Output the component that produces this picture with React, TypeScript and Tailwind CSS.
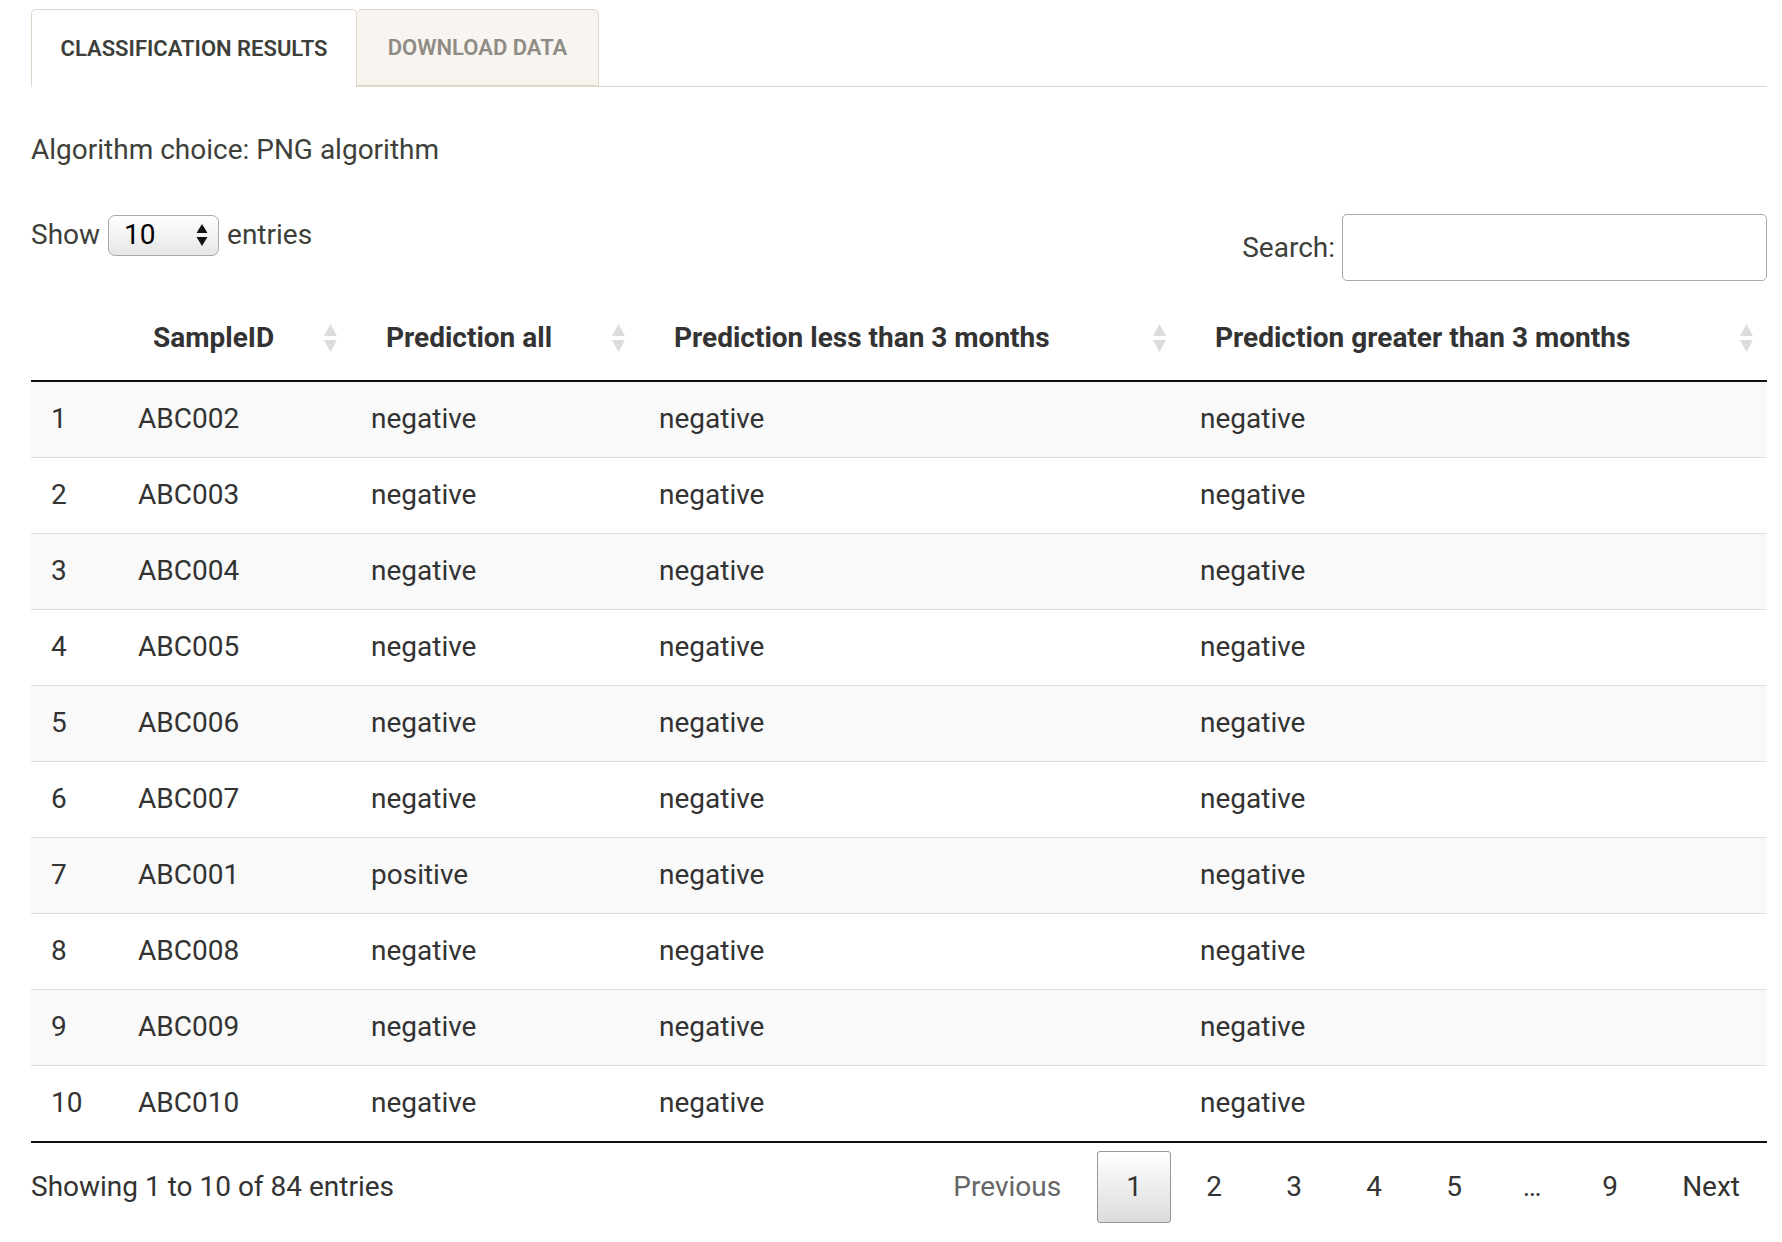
import React from "react";

const rows = [
  ["1", "ABC002", "negative", "negative", "negative"],
  ["2", "ABC003", "negative", "negative", "negative"],
  ["3", "ABC004", "negative", "negative", "negative"],
  ["4", "ABC005", "negative", "negative", "negative"],
  ["5", "ABC006", "negative", "negative", "negative"],
  ["6", "ABC007", "negative", "negative", "negative"],
  ["7", "ABC001", "positive", "negative", "negative"],
  ["8", "ABC008", "negative", "negative", "negative"],
  ["9", "ABC009", "negative", "negative", "negative"],
  ["10", "ABC010", "negative", "negative", "negative"],
];

const headers = [
  "SampleID",
  "Prediction all",
  "Prediction less than 3 months",
  "Prediction greater than 3 months",
];

function SortIcon() {
  return (
    <svg width="13" height="28" viewBox="0 0 13 28" className="absolute right-[14px] top-1/2 -translate-y-1/2">
      <polygon points="6.5,0 13,12 0,12" fill="#dcdcdc" />
      <polygon points="0,16 13,16 6.5,28" fill="#dcdcdc" />
    </svg>
  );
}

function PageButton({ label, active }: { label: string; active?: boolean }) {
  if (active) {
    return (
      <span className="ml-[6px] flex h-[72px] w-[74px] items-center justify-center rounded-[3px] border border-[#979797] bg-gradient-to-b from-white to-[#dcdcdc] text-[#333]">
        {label}
      </span>
    );
  }
  return (
    <span className="ml-[6px] flex h-[72px] w-[74px] items-center justify-center text-[#333]">{label}</span>
  );
}

export default function App() {
  return (
    <div className="min-h-[1242px] w-full bg-white pl-[31px] pr-[15px] pt-[9px] text-[#3e3f3a] [font-family:Roboto,'Liberation_Sans',sans-serif]">
      {/* Tabs */}
      <div className="flex h-[78px] border-b border-[#dfd7ca]">
        <div className="-mb-px flex w-[326px] items-center justify-center rounded-t-[5px] border border-b-0 border-[#dfd7ca] bg-white text-[22px] font-semibold uppercase text-[#3e3f3a]">
          Classification Results
        </div>
        <div className="flex w-[242px] items-center justify-center rounded-t-[5px] border border-l-0 border-[#dfd7ca] bg-[#f8f5f0] text-[22px] font-semibold uppercase text-[#8e8c84]">
          Download Data
        </div>
      </div>

      <p className="mt-[48px] text-[28px] leading-[30px]">Algorithm choice: PNG algorithm</p>

      {/* Length + search */}
      <div className="mt-[49px] flex items-start justify-between">
        <div className="flex items-center text-[28px]">
          <span>Show</span>
          <div className="mx-[8px] flex h-[41px] w-[111px] items-center justify-between rounded-[7px] border border-[#a9a9a9] bg-gradient-to-b from-white to-[#e6e6e6] pl-[15px] pr-[10px] text-[28px] text-black">
            <span>10</span>
            <svg width="12" height="24" viewBox="0 0 12 24">
              <polygon points="6,1 11.5,10 0.5,10" fill="#111" />
              <polygon points="0.5,14 11.5,14 6,23" fill="#111" />
            </svg>
          </div>
          <span>entries</span>
        </div>
        <div className="flex items-center text-[28px]">
          <span className="mr-[7px]">Search:</span>
          <div className="h-[67px] w-[425px] rounded-[5px] border border-[#a8a8a8] bg-white" />
        </div>
      </div>

      {/* Table */}
      <table className="mt-[15px] w-full table-fixed border-collapse text-[28px]">
        <colgroup>
          <col className="w-[87px]" />
          <col className="w-[233px]" />
          <col className="w-[288px]" />
          <col className="w-[541px]" />
          <col />
        </colgroup>
        <thead>
          <tr className="h-[85px] border-b-2 border-[#111]">
            <th />
            {headers.map((h) => (
              <th key={h} className="relative pl-[35px] text-left font-bold text-[#333]">
                {h}
                <SortIcon />
              </th>
            ))}
          </tr>
        </thead>
        <tbody>
          {rows.map((r, i) => (
            <tr
              key={r[0]}
              className={`h-[76px] ${i > 0 ? "border-t border-[#ddd]" : ""} ${i % 2 === 0 ? "bg-[#f9f9f9]" : "bg-white"}`}
            >
              {r.map((c, j) => (
                <td key={j} className="pl-[20px] text-[#333]">
                  {c}
                </td>
              ))}
            </tr>
          ))}
        </tbody>
      </table>
      <div className="border-t-2 border-[#111]" />

      {/* Footer */}
      <div className="mt-[8px] flex items-center justify-between text-[28px] text-[#333]">
        <span>Showing 1 to 10 of 84 entries</span>
        <div className="flex items-center">
          <span className="flex h-[72px] items-center px-[30px] text-[#666]">Previous</span>
          <PageButton label="1" active />
          <PageButton label="2" />
          <PageButton label="3" />
          <PageButton label="4" />
          <PageButton label="5" />
          <span className="ml-[6px] flex h-[72px] w-[70px] items-center justify-center">…</span>
          <PageButton label="9" />
          <span className="ml-[8px] flex h-[72px] items-center px-[27px]">Next</span>
        </div>
      </div>
    </div>
  );
}
